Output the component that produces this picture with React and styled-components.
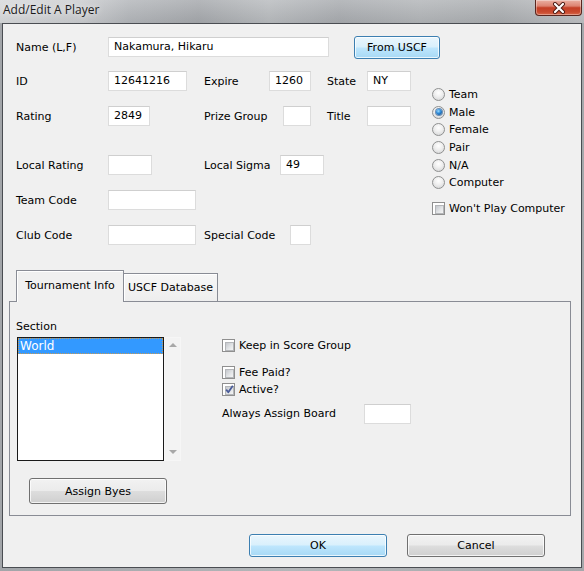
import React from "react";
import styled, { createGlobalStyle, css } from "styled-components";

const Global = createGlobalStyle`
  html, body { margin: 0; padding: 0; }
  body { font-family: "DejaVu Sans", Tahoma, sans-serif; font-size: 11px; color: #000; }
  * { box-sizing: border-box; }
`;

const Window = styled.div`
  width: 584px;
  height: 571px;
  display: flex;
  flex-direction: column;
  overflow: hidden;
  background: linear-gradient(90deg, #a2a5a9 0%, #b3b6b9 50%, #a5a8ab 100%);
`;

const TitleBar = styled.div`
  height: 23px;
  flex: none;
  display: flex;
  justify-content: space-between;
  align-items: flex-start;
  background:
    linear-gradient(180deg, rgba(255,255,255,0.18) 0%, rgba(0,0,0,0.04) 100%),
    linear-gradient(90deg, #d6d8da 0%, #c9cbce 14%, #b2b5b9 22%, #a4a7ab 34%, #b7babd 46%, #a7aaae 58%, #b1b4b7 72%, #a9acaf 86%, #bdbfc2 100%);
`;

const Title = styled.div`
  font-family: "Open Sans", "Noto Sans", sans-serif;
  font-size: 12px;
  line-height: 20px;
  padding-left: 3px;
  color: #1b1b1b;
  text-shadow: 0 0 6px rgba(255,255,255,0.9);
`;

const CloseButton = styled.div`
  width: 47px;
  height: 16px;
  margin-right: 2px;
  border: 1px solid #5a261e;
  border-top: none;
  border-radius: 0 0 4px 4px;
  background: linear-gradient(180deg, #eab0a2 0%, #dd8371 40%, #c43f25 52%, #c94a2f 80%, #d86a4c 100%);
  box-shadow: inset 0 0 0 1px rgba(255,255,255,0.35);
  display: flex;
  align-items: center;
  justify-content: center;
`;

const Client = styled.div`
  flex: 1;
  margin: 0 2px 3px 2px;
  border: 1px solid #4a4d52;
  background: #f0f0f0;
  display: flex;
  flex-direction: column;
  padding-left: 13px;
`;

const NameRow = styled.div`
  margin-top: 12px;
  height: 22px;
  display: flex;
  align-items: center;
`;

const Label = styled.span`
  flex: none;
  width: ${(p) => p.$w || 0}px;
  white-space: nowrap;
  line-height: 13px;
`;

const TextBox = styled.div`
  flex: none;
  width: ${(p) => p.$w}px;
  height: 20px;
  background: #fff;
  border: 1px solid #dcdcdc;
  border-top-color: #cfcfcf;
  padding-left: 5px;
  line-height: 18px;
  white-space: nowrap;
  overflow: hidden;
`;

const Button = styled.div`
  flex: none;
  width: ${(p) => p.$w}px;
  height: ${(p) => p.$h}px;
  margin-left: ${(p) => p.$ml || 0}px;
  border: 1px solid #707070;
  border-radius: 3px;
  display: flex;
  align-items: center;
  justify-content: center;
  box-shadow: inset 0 0 0 1px rgba(255,255,255,0.75);
  background: linear-gradient(180deg, #f2f2f2 0%, #ebebeb 48%, #dddddd 52%, #cfcfcf 100%);
  ${(p) =>
    p.$primary &&
    css`
      border-color: #3c7fb1;
      background: linear-gradient(180deg, #eaf6fd 0%, #d9f0fc 48%, #bee6fd 52%, #a7d9f5 100%);
    `}
`;

const Upper = styled.div`
  display: flex;
`;

const Fields = styled.div`
  width: 416px;
  flex: none;
  display: flex;
  flex-direction: column;
`;

const FormRow = styled.div`
  margin-top: ${(p) => p.$mt}px;
  height: 20px;
  display: grid;
  grid-template-columns: 188px 123px auto;
  align-items: center;
`;

const Field = styled.div`
  display: flex;
  align-items: center;
`;

const Options = styled.div`
  padding-top: 28px;
  display: flex;
  flex-direction: column;
`;

const OptionItem = styled.div`
  height: ${(p) => p.$h || 17.6}px;
  margin-top: ${(p) => p.$mt || 0}px;
  display: flex;
  align-items: center;
  gap: 4px;
  white-space: nowrap;
`;

const RadioCircle = styled.span`
  flex: none;
  width: 13px;
  height: 13px;
  border-radius: 50%;
  border: 1px solid #8f9090;
  background: radial-gradient(circle at 50% 35%, #ffffff 0%, #eeeeee 45%, #cfd0d1 100%);
  display: flex;
  align-items: center;
  justify-content: center;
  ${(p) =>
    p.$checked &&
    css`
      &::after {
        content: "";
        width: 6px;
        height: 6px;
        border-radius: 50%;
        background: radial-gradient(circle at 40% 35%, #9adcff 0%, #2a86d6 45%, #0d3f74 100%);
        box-shadow: 0 0 0 1px #6b8db3;
      }
    `}
`;

const CheckBoxBox = styled.span`
  flex: none;
  position: relative;
  width: 13px;
  height: 13px;
  border: 1px solid #8f8f8f;
  background: #fff;
  padding: 2px;
  &::before {
    content: "";
    display: block;
    width: 100%;
    height: 100%;
    background: linear-gradient(135deg, #c4c7cc 0%, #e4e6e8 60%, #f4f4f4 100%);
    border: 1px solid #b4b6b9;
  }
  svg {
    position: absolute;
    left: 1px;
    top: 0px;
  }
`;

const Tabs = styled.div`
  margin-top: 25px;
  margin-left: -7px;
  width: 562px;
  display: flex;
  flex-direction: column;
`;

const TabStrip = styled.div`
  height: 31px;
  padding-left: 7px;
  display: flex;
  align-items: flex-end;
  position: relative;
  z-index: 1;
`;

const Tab = styled.div`
  width: ${(p) => p.$w}px;
  height: ${(p) => (p.$active ? 32 : 28)}px;
  margin-bottom: ${(p) => (p.$active ? -1 : 0)}px;
  border: 1px solid #898c95;
  border-bottom: none;
  display: flex;
  align-items: center;
  justify-content: center;
  padding-bottom: ${(p) => (p.$active ? 3 : 0)}px;
  white-space: nowrap;
  background: ${(p) => (p.$active ? "#f0f0f0" : "linear-gradient(180deg, #f7f7f7 0%, #eeeeee 100%)")};
  box-shadow: inset 1px 1px 0 #ffffff;
  ${(p) => !p.$active && css`border-left: none;`}
`;

const TabPanel = styled.div`
  height: 215px;
  border: 1px solid #898c95;
  background: #f0f0f0;
  display: flex;
  padding: 18px 0 0 6px;
`;

const LeftCol = styled.div`
  width: 206px;
  flex: none;
  display: flex;
  flex-direction: column;
`;

const ListRow = styled.div`
  margin-top: 4px;
  margin-left: 1px;
  display: flex;
`;

const ListBox = styled.div`
  width: 147px;
  height: 124px;
  border: 1px solid #1a1a1a;
  background: #fff;
  padding: 0;
`;

const ListItem = styled.div`
  height: 16px;
  line-height: 16px;
  padding-left: 2px;
  font-size: 12px;
  ${(p) =>
    p.$selected &&
    css`
      background: #3399ff;
      color: #fff;
      outline: 1px dotted #c89a55;
      outline-offset: -1px;
    `}
`;

const ScrollTrack = styled.div`
  width: 17px;
  height: 124px;
  background: #f3f3f3;
  border: 1px solid #f6f6f6;
  display: flex;
  flex-direction: column;
  justify-content: space-between;
  align-items: center;
  padding: 5px 0 6px 0;
`;

const Arrow = styled.span`
  width: 0;
  height: 0;
  border-left: 4px solid transparent;
  border-right: 4px solid transparent;
  ${(p) =>
    p.$down
      ? css`border-top: 4px solid #a8a8a8;`
      : css`border-bottom: 4px solid #a8a8a8;`}
`;

const RightCol = styled.div`
  display: flex;
  flex-direction: column;
`;

const PanelRow = styled.div`
  margin-top: ${(p) => p.$mt || 0}px;
  height: ${(p) => p.$h || 17}px;
  display: flex;
  align-items: center;
  gap: 4px;
  white-space: nowrap;
`;

const Footer = styled.div`
  margin-top: 18px;
  padding-right: 36px;
  display: flex;
  justify-content: flex-end;
  gap: 20px;
`;

const Radio = ({ checked, children }) => (
  <OptionItem>
    <RadioCircle $checked={checked} />
    <span>{children}</span>
  </OptionItem>
);

const CheckBox = ({ checked }) => (
  <CheckBoxBox>
    {checked && (
      <svg width="11" height="11" viewBox="0 0 11 11">
        <path d="M2.2 5.6 L4.3 8.2 L8.8 1.8" fill="none" stroke="#4a5c9a" strokeWidth="1.8" strokeLinejoin="round" />
      </svg>
    )}
  </CheckBoxBox>
);

export default function App() {
  return (
    <>
      <Global />
      <Window>
        <TitleBar>
          <Title>Add/Edit A Player</Title>
          <CloseButton>
            <svg width="14" height="12" viewBox="0 0 14 12">
              <path d="M3 2 L11 10 M11 2 L3 10" stroke="#4b1a12" strokeWidth="4" strokeLinecap="round" />
              <path d="M3 2 L11 10 M11 2 L3 10" stroke="#ffffff" strokeWidth="2.2" strokeLinecap="round" />
            </svg>
          </CloseButton>
        </TitleBar>
        <Client>
          <NameRow>
            <Label $w={92}>Name (L,F)</Label>
            <TextBox $w={221}>Nakamura, Hikaru</TextBox>
            <Button $w={86} $h={23} $ml={25} $primary>From USCF</Button>
          </NameRow>
          <Upper>
            <Fields>
              <FormRow $mt={13}>
                <Field><Label $w={92}>ID</Label><TextBox $w={79}>12641216</TextBox></Field>
                <Field><Label $w={65}>Expire</Label><TextBox $w={42}>1260</TextBox></Field>
                <Field><Label $w={40}>State</Label><TextBox $w={44}>NY</TextBox></Field>
              </FormRow>
              <FormRow $mt={15}>
                <Field><Label $w={92}>Rating</Label><TextBox $w={42}>2849</TextBox></Field>
                <Field><Label $w={79}>Prize Group</Label><TextBox $w={28} /></Field>
                <Field><Label $w={40}>Title</Label><TextBox $w={44} /></Field>
              </FormRow>
              <FormRow $mt={29}>
                <Field><Label $w={92}>Local Rating</Label><TextBox $w={44} /></Field>
                <Field><Label $w={76}>Local Sigma</Label><TextBox $w={44}>49</TextBox></Field>
              </FormRow>
              <FormRow $mt={15}>
                <Field><Label $w={92}>Team Code</Label><TextBox $w={88} /></Field>
              </FormRow>
              <FormRow $mt={15}>
                <Field><Label $w={92}>Club Code</Label><TextBox $w={88} /></Field>
                <Field><Label $w={86}>Special Code</Label><TextBox $w={21} /></Field>
              </FormRow>
            </Fields>
            <Options>
              <Radio>Team</Radio>
              <Radio checked>Male</Radio>
              <Radio>Female</Radio>
              <Radio>Pair</Radio>
              <Radio>N/A</Radio>
              <Radio>Computer</Radio>
              <OptionItem $mt={8.4}>
                <CheckBox />
                <span>Won't Play Computer</span>
              </OptionItem>
            </Options>
          </Upper>
          <Tabs>
            <TabStrip>
              <Tab $w={108} $active>Tournament Info</Tab>
              <Tab $w={94}>USCF Database</Tab>
            </TabStrip>
            <TabPanel>
              <LeftCol>
                <Label>Section</Label>
                <ListRow>
                  <ListBox>
                    <ListItem $selected>World</ListItem>
                  </ListBox>
                  <ScrollTrack>
                    <Arrow />
                    <Arrow $down />
                  </ScrollTrack>
                </ListRow>
                <Button $w={138} $h={26} $ml={13} style={{ marginTop: 17 }}>Assign Byes</Button>
              </LeftCol>
              <RightCol>
                <PanelRow $mt={16.5}>
                  <CheckBox />
                  <span>Keep in Score Group</span>
                </PanelRow>
                <PanelRow $mt={10}>
                  <CheckBox />
                  <span>Fee Paid?</span>
                </PanelRow>
                <PanelRow>
                  <CheckBox checked />
                  <span>Active?</span>
                </PanelRow>
                <PanelRow $mt={6} $h={20}>
                  <Label $w={138}>Always Assign Board</Label>
                  <TextBox $w={47} />
                </PanelRow>
              </RightCol>
            </TabPanel>
          </Tabs>
          <Footer>
            <Button $w={138} $h={23} $primary>OK</Button>
            <Button $w={138} $h={23}>Cancel</Button>
          </Footer>
        </Client>
      </Window>
    </>
  );
}
